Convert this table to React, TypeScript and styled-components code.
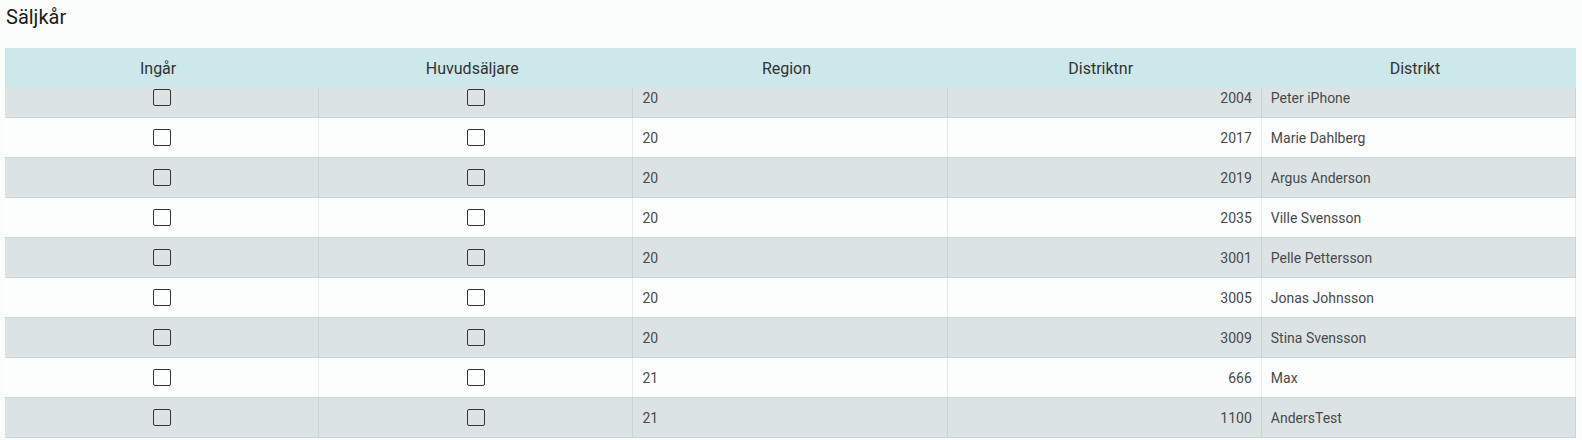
import styled, { createGlobalStyle } from "styled-components";

const GlobalStyle = createGlobalStyle`
  html, body {
    margin: 0;
    padding: 0;
    background-color: #fbfdfc;
  }
  * {
    box-sizing: border-box;
  }
`;

type Seller = {
  region: string;
  districtNr: string;
  district: string;
};

const sellers: Seller[] = [
  { region: "20", districtNr: "2004", district: "Peter iPhone" },
  { region: "20", districtNr: "2017", district: "Marie Dahlberg" },
  { region: "20", districtNr: "2019", district: "Argus Anderson" },
  { region: "20", districtNr: "2035", district: "Ville Svensson" },
  { region: "20", districtNr: "3001", district: "Pelle Pettersson" },
  { region: "20", districtNr: "3005", district: "Jonas Johnsson" },
  { region: "20", districtNr: "3009", district: "Stina Svensson" },
  { region: "21", districtNr: "666", district: "Max" },
  { region: "21", districtNr: "1100", district: "AndersTest" },
];

const columns = ["Ingår", "Huvudsäljare", "Region", "Distriktnr", "Distrikt"];

const SalesForcePage = () => {
  return (
    <MainWrapper>
      <GlobalStyle />
      <Title>Säljkår</Title>
      <TableWrapper>
        <HeaderRow>
          {columns.map((col) => (
            <HeaderCell key={col}>{col}</HeaderCell>
          ))}
        </HeaderRow>
        <TableBody>
          <RowList>
            {sellers.map((s, i) => (
              <Row key={s.districtNr} $odd={i % 2 === 0}>
                <Cell $align="center">
                  <CheckBox type="checkbox" readOnly />
                </Cell>
                <Cell $align="center">
                  <CheckBox type="checkbox" readOnly />
                </Cell>
                <Cell>{s.region}</Cell>
                <Cell $align="right">{s.districtNr}</Cell>
                <Cell>{s.district}</Cell>
              </Row>
            ))}
            <Row $odd={false} />
          </RowList>
        </TableBody>
      </TableWrapper>
    </MainWrapper>
  );
};

const MainWrapper = styled.div`
  height: 440px;
  padding: 0 6px 0 5px;
  display: flex;
  flex-direction: column;
  overflow: hidden;
  font-family: Roboto, "Noto Sans", Arial, sans-serif;
  background-color: #fbfdfc;
`;

const Title = styled.h2`
  margin: 0 0 16px 1px;
  padding-top: 2px;
  font-size: 20px;
  line-height: 30px;
  font-weight: 400;
  color: #1b1b1b;
`;

const TableWrapper = styled.div`
  flex: 1;
  min-height: 0;
  display: flex;
  flex-direction: column;
`;

const HeaderRow = styled.div`
  display: grid;
  grid-template-columns: repeat(5, 1fr);
  height: 40px;
  background-color: #cde8ea;
`;

const HeaderCell = styled.div`
  display: flex;
  align-items: center;
  justify-content: center;
  padding: 0 8px 0 0;
  font-size: 16px;
  color: #333;
`;

const TableBody = styled.div`
  flex: 1;
  min-height: 0;
  overflow: hidden;
`;

const RowList = styled.div`
  margin-top: -10px;
`;

const Row = styled.div<{ $odd: boolean }>`
  display: grid;
  grid-template-columns: repeat(5, 1fr);
  height: 40px;
  border-bottom: 1px solid #ccd4d6;
  background-color: ${({ $odd }) => ($odd ? "#dbe3e5" : "#fcfdfd")};
`;

const Cell = styled.div<{ $align?: "left" | "center" | "right" }>`
  display: flex;
  align-items: center;
  justify-content: ${({ $align }) =>
    $align === "center" ? "center" : $align === "right" ? "flex-end" : "flex-start"};
  padding: 0 9px;
  border-right: 1px solid rgba(0, 0, 0, 0.07);
  font-size: 14px;
  color: #4a4a4a;
  min-width: 0;
`;

const CheckBox = styled.input`
  appearance: none;
  margin: 0;
  width: 18px;
  height: 17px;
  border: 1.5px solid #333;
  border-radius: 2px;
  background: transparent;
`;

export default SalesForcePage;
